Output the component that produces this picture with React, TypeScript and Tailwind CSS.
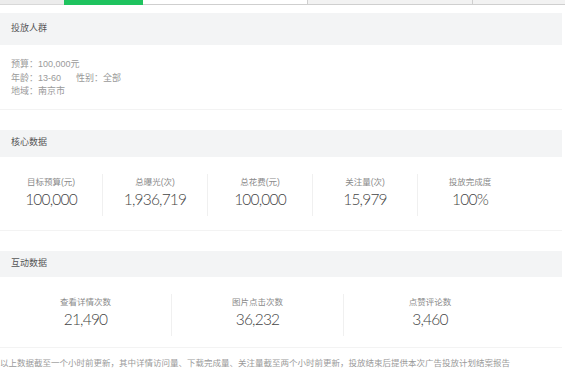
const CJK = "font-['Liberation_Sans','Noto_Sans_CJK_SC',sans-serif]";

const coreStats = [
  { label: "目标预算(元)", value: "100,000" },
  { label: "总曝光(次)", value: "1,936,719" },
  { label: "总花费(元)", value: "100,000" },
  { label: "关注量(次)", value: "15,979" },
  { label: "投放完成度", value: "100%" },
];

const interactStats = [
  { label: "查看详情次数", value: "21,490" },
  { label: "图片点击次数", value: "36,232" },
  { label: "点赞评论数", value: "3,460" },
];

function CardHeader({ title, h }: { title: string; h: string }) {
  return (
    <div className={`${h} bg-[#f3f4f5] px-[11px] flex items-center text-[9px] text-[#555]`}>
      {title}
    </div>
  );
}

function Stat({ label, value, first }: { label: string; value: string; first?: boolean }) {
  return (
    <div className={`h-[42px] flex flex-col items-center pt-[2px] ${first ? "" : "border-l border-[#f0f0f0]"}`}>
      <span className="text-[8.5px] leading-[12px] text-[#8a8a8a]">{label}</span>
      <span className="font-['Lato','Liberation_Sans',sans-serif] font-light text-[15.5px] leading-[20px] mt-[1px] text-[#444] tracking-[-0.8px]">
        {value}
      </span>
    </div>
  );
}

export default function App() {
  return (
    <div className={`w-[565px] h-[374px] bg-white overflow-hidden ${CJK}`}>
      {/* Tabs */}
      <div className="h-[5px] flex">
        <div className="w-[64px] bg-[#ececec] border-b border-[#d8d8d8]" />
        <div className="w-[79px] bg-[#1fc35f]" />
        <div className="w-[164px] bg-white border-b border-[#cfcfcf]" />
        <div className="w-[165px] bg-[#f2f2f2] border-l border-b border-[#cfcfcf]" />
        <div className="flex-1 bg-[#f2f2f2] border-l border-b border-[#cfcfcf]" />
      </div>

      {/* 投放人群 */}
      <div className="mt-[8px] mr-[3px]">
        <CardHeader title="投放人群" h="h-[32px]" />
        <div className="px-[11px] pt-[13px] pb-[10px] text-[9px] leading-[13.5px] text-[#9a9a9a] border-b border-[#f3f3f3]">
          <div>预算：100,000元</div>
          <div className="flex">
            <span className="w-[65px]">年龄：13-60</span>
            <span>性别：全部</span>
          </div>
          <div>地域：南京市</div>
        </div>
      </div>

      {/* 核心数据 */}
      <div className="mt-[20px] mr-[3px]">
        <CardHeader title="核心数据" h="h-[27px]" />
        <div className="pt-[17px] pb-[14px] border-b border-[#f3f3f3]">
          <div className="grid grid-cols-[102px_105px_105px_105px_105px]">
            {coreStats.map((s, i) => (
              <Stat key={s.label} label={s.label} value={s.value} first={i === 0} />
            ))}
          </div>
        </div>
      </div>

      {/* 互动数据 */}
      <div className="mt-[20px] mr-[3px]">
        <CardHeader title="互动数据" h="h-[26px]" />
        <div className="pt-[17px] pb-[11px] border-b border-[#f3f3f3]">
          <div className="grid grid-cols-[171px_172px_173px]">
            {interactStats.map((s, i) => (
              <Stat key={s.label} label={s.label} value={s.value} first={i === 0} />
            ))}
          </div>
        </div>
      </div>

      <p className="mt-[9px] text-[8.5px] leading-[12px] text-[#9a9a9a] whitespace-nowrap">
        以上数据截至一个小时前更新，其中详情访问量、下载完成量、关注量截至两个小时前更新，投放结束后提供本次广告投放计划结案报告
      </p>
    </div>
  );
}
